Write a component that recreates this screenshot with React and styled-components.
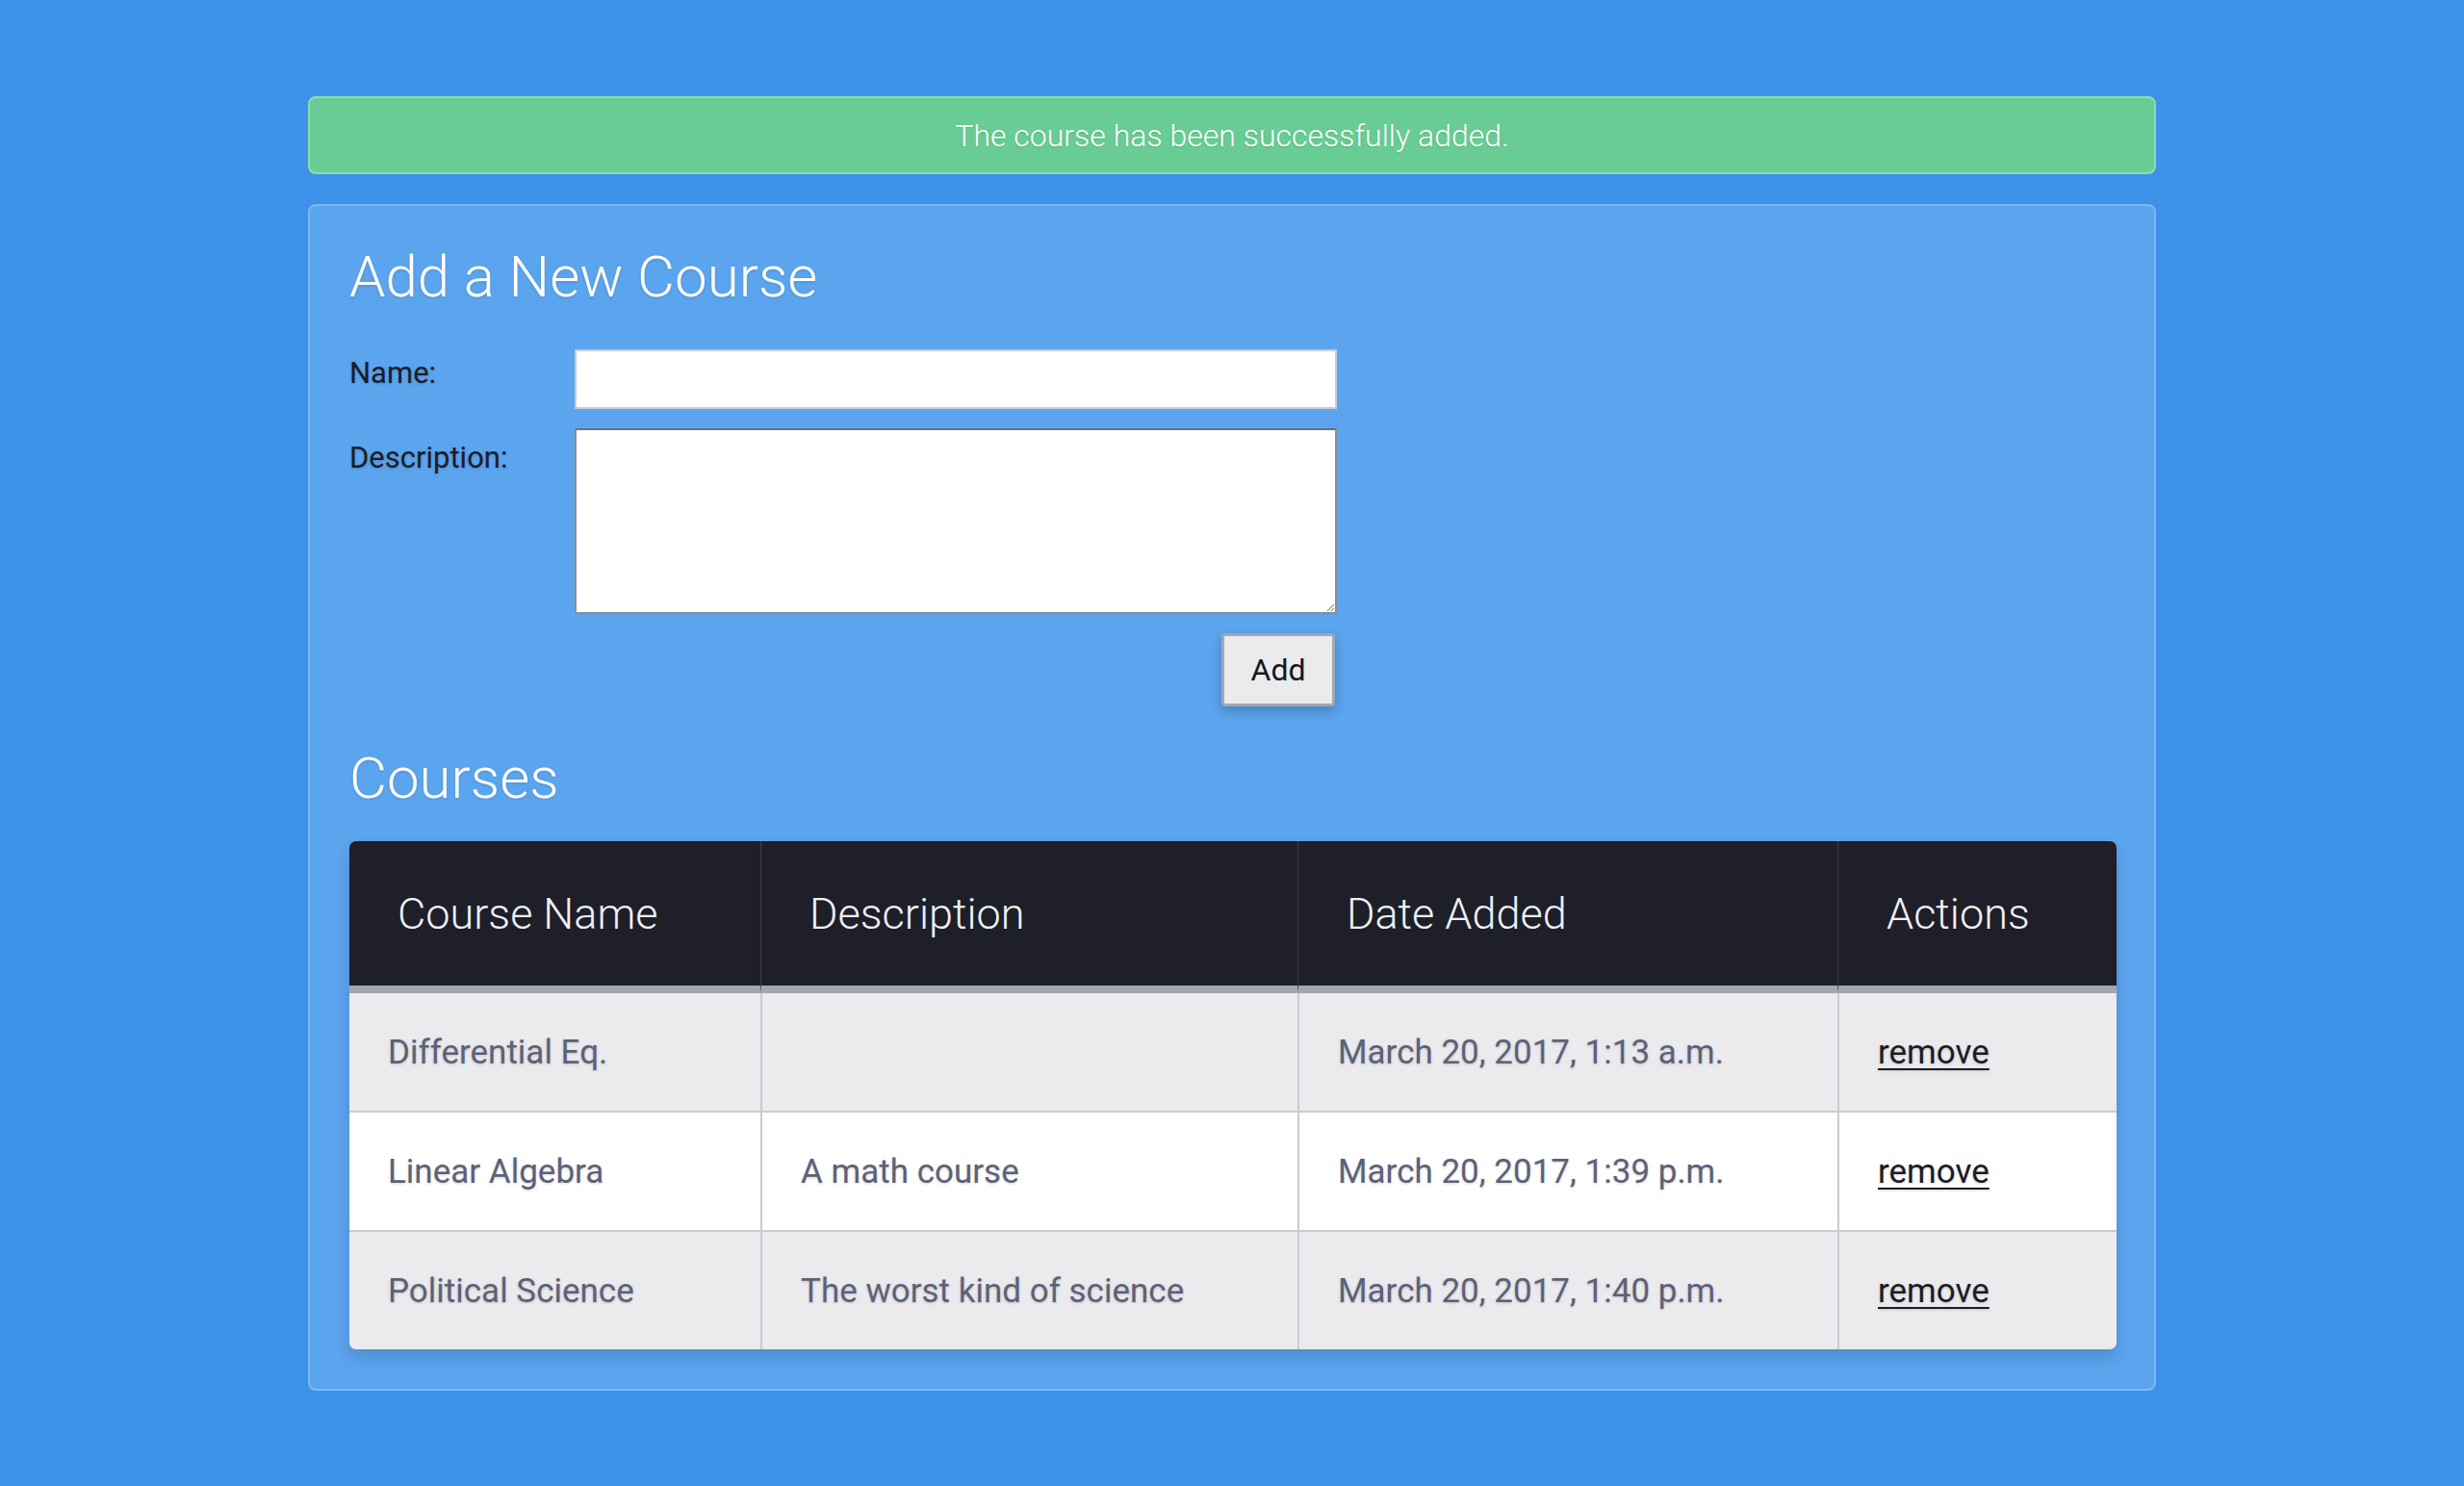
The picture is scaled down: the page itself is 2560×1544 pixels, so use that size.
import React from 'react'
import styled, { createGlobalStyle } from 'styled-components'

const GlobalStyle = createGlobalStyle`
    html, body {
        margin: 0;
        padding: 0;
        background-color: #3d91e9;
        font-family: Roboto, "Liberation Sans", sans-serif;
    }
`;

const Page = styled.main`
    min-height: 1544px;
    box-sizing: border-box;
    padding: 100px 0 60px;
`;

const Container = styled.div`
    width: 1920px;
    margin: 0 auto;
    display: flex;
    flex-direction: column;
    gap: 31px;
`;

const Alert = styled.div`
    height: 81px;
    box-sizing: border-box;
    background-color: #68cc94;
    border: 2px solid #8edcb0;
    border-radius: 8px;
    display: flex;
    align-items: center;
    justify-content: center;
    color: #ffffff;
    font-size: 32px;
    font-weight: 300;
    text-shadow: 0 1px 2px rgba(0, 0, 0, 0.12);
`;

const Panel = styled.section`
    background-color: #5ba4ee;
    border: 2px solid #7db8f3;
    border-radius: 8px;
    padding: 0 41px 41px;
`;

const Heading = styled.h2`
    margin: ${({ top }) => top}px 0 0;
    font-size: 60px;
    font-weight: 300;
    line-height: 1.2;
    color: #ffffff;
    text-shadow: 0 1px 3px rgba(0, 0, 0, 0.12);
`;

const Form = styled.form`
    margin-top: 39px;
    width: 1026px;
    display: grid;
    grid-template-columns: 234px 792px;
    row-gap: 20px;
`;

const Label = styled.label`
    padding-top: ${({ offset }) => offset}px;
    font-size: 31px;
    line-height: 1.2;
    color: #1b1d26;
    text-shadow: 0 1px 3px rgba(0, 0, 0, 0.18);
`;

const TextInput = styled.input`
    box-sizing: border-box;
    width: 792px;
    height: 62px;
    margin: 0;
    border: 2px solid #c7cbd3;
    background: #ffffff;
    font-size: 30px;
    font-family: inherit;
    padding: 0 12px;
`;

const TextArea = styled.textarea`
    box-sizing: border-box;
    width: 792px;
    height: 193px;
    margin: 0;
    border: 2px solid #8a8d96;
    border-top-color: #6e7079;
    background: #ffffff;
    font-size: 30px;
    font-family: inherit;
    padding: 8px 12px;
    display: block;
`;

const ButtonRow = styled.div`
    grid-column: 2;
    display: flex;
    justify-content: flex-end;
    padding-right: 2px;
`;

const Button = styled.button`
    width: 118px;
    height: 76px;
    box-sizing: border-box;
    background-color: #ebeaed;
    border: 3px solid #a3a8b3;
    border-radius: 4px;
    font-family: inherit;
    font-size: 32px;
    color: #16171d;
    box-shadow: 0 5px 12px rgba(0, 0, 0, 0.22);
    cursor: pointer;
`;

const Table = styled.table`
    margin-top: 29px;
    width: 1836px;
    border-collapse: separate;
    border-spacing: 0;
    table-layout: fixed;
    border-radius: 7px;
    overflow: hidden;
    box-shadow: 0 8px 16px rgba(0, 0, 0, 0.14);
`;

const HeadCell = styled.th`
    width: ${({ w }) => (w ? `${w}px` : 'auto')};
    height: 150px;
    padding: 0 0 0 50px;
    background-color: #1e1f28;
    border-bottom: 8px solid #a1a7b1;
    border-left: ${({ first }) => (first ? 'none' : '1px solid #3b3d48')};
    text-align: left;
    font-size: 45px;
    font-weight: 300;
    color: #eef0f6;
    box-sizing: content-box;
`;

const Row = styled.tr`
    background-color: ${({ striped }) => (striped ? '#ebeaed' : '#ffffff')};
`;

const Cell = styled.td`
    height: 44px;
    padding: 40px 20px 38px 40px;
    border-left: ${({ first }) => (first ? 'none' : '2px solid #cbcad2')};
    border-top: ${({ top }) => (top ? 'none' : '2px solid #cbcad2')};
    font-size: 35px;
    line-height: 44px;
    color: #5d6178;
    text-shadow: 0 1px 3px rgba(0, 0, 0, 0.18);
    white-space: nowrap;
`;

const RemoveLink = styled.a`
    color: #1b1c24;
    text-decoration: underline;
    text-underline-offset: 5px;
    text-decoration-thickness: 2px;
`;

const courses = [
    { name: 'Differential Eq.', description: '', date: 'March 20, 2017, 1:13 a.m.' },
    { name: 'Linear Algebra', description: 'A math course', date: 'March 20, 2017, 1:39 p.m.' },
    { name: 'Political Science', description: 'The worst kind of science', date: 'March 20, 2017, 1:40 p.m.' },
];

const App = () => (
    <Page>
        <GlobalStyle />
        <Container>
            <Alert>The course has been successfully added.</Alert>
            <Panel>
                <Heading top={38}>Add a New Course</Heading>
                <Form onSubmit={(e) => e.preventDefault()}>
                    <Label offset={6} htmlFor="name">Name:</Label>
                    <TextInput id="name" type="text" />
                    <Label offset={12} htmlFor="description">Description:</Label>
                    <TextArea id="description" />
                    <ButtonRow>
                        <Button type="submit">Add</Button>
                    </ButtonRow>
                </Form>
                <Heading top={39}>Courses</Heading>
                <Table>
                    <thead>
                        <tr>
                            <HeadCell first w={377}>Course Name</HeadCell>
                            <HeadCell w={507}>Description</HeadCell>
                            <HeadCell w={510}>Date Added</HeadCell>
                            <HeadCell>Actions</HeadCell>
                        </tr>
                    </thead>
                    <tbody>
                        {courses.map((course, i) => (
                            <Row key={course.name} striped={i % 2 === 0}>
                                <Cell first top={i === 0}>{course.name}</Cell>
                                <Cell top={i === 0}>{course.description}</Cell>
                                <Cell top={i === 0}>{course.date}</Cell>
                                <Cell top={i === 0}><RemoveLink href="#">remove</RemoveLink></Cell>
                            </Row>
                        ))}
                    </tbody>
                </Table>
            </Panel>
        </Container>
    </Page>
)

export default App
